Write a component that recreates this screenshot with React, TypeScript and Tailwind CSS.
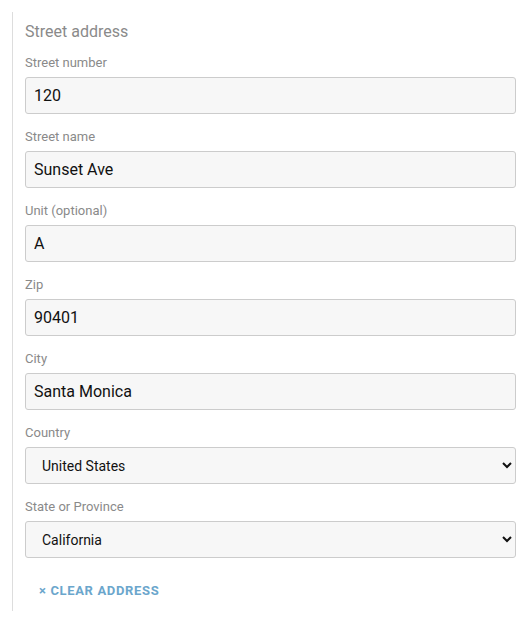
import { useState } from "react"

type Field = { label: string; value: string }

const textFields: Field[] = [
  { label: "Street number", value: "120" },
  { label: "Street name", value: "Sunset Ave" },
  { label: "Unit (optional)", value: "A" },
  { label: "Zip", value: "90401" },
  { label: "City", value: "Santa Monica" },
]

export default function App() {
  const [values, setValues] = useState(textFields.map((f) => f.value))
  const [country, setCountry] = useState("United States")
  const [state, setState] = useState("California")

  return (
    <div className="bg-white min-h-screen pt-3" style={{ fontFamily: "Roboto, 'Liberation Sans', sans-serif" }}>
      <div className="ml-3 mr-4 border-l border-[#dddddd] pl-3 pt-[10px] pb-[12px]">
        <h3 className="text-[16px] leading-5 text-[#8a8a8a] mb-[12px]">Street address</h3>

        {textFields.map((f, i) => (
          <div key={f.label} className="mb-[14px]">
            <label className="block text-[13px] leading-[18px] text-[#8a8a8a] mb-[5px]">{f.label}</label>
            <input
              value={values[i]}
              onChange={(e) => setValues(values.map((v, j) => (j === i ? e.target.value : v)))}
              className="block w-full h-[37px] rounded-[3px] border border-[#cccccc] bg-[#f7f7f7] px-2 text-[16px] text-[#111] outline-none"
            />
          </div>
        ))}

        <div className="mb-[14px]">
          <label className="block text-[13px] leading-[18px] text-[#8a8a8a] mb-[5px]">Country</label>
          <select
            value={country}
            onChange={(e) => setCountry(e.target.value)}
            className="block w-full h-[37px] rounded-[3px] border border-[#cccccc] bg-[#f7f7f7] pl-3 pr-2 text-[14px] text-[#111] outline-none"
          >
            <option>United States</option>
            <option>Canada</option>
          </select>
        </div>

        <div>
          <label className="block text-[13px] leading-[18px] text-[#8a8a8a] mb-[5px]">State or Province</label>
          <select
            value={state}
            onChange={(e) => setState(e.target.value)}
            className="block w-full h-[37px] rounded-[3px] border border-[#cccccc] bg-[#f7f7f7] pl-3 pr-2 text-[14px] text-[#111] outline-none"
          >
            <option>California</option>
            <option>Oregon</option>
            <option>Washington</option>
          </select>
        </div>

        <button className="mt-[25px] ml-[14px] block text-[13px] leading-4 font-bold tracking-[0.05em] text-[#6ba6cc]">
          × CLEAR ADDRESS
        </button>
      </div>
    </div>
  )
}
